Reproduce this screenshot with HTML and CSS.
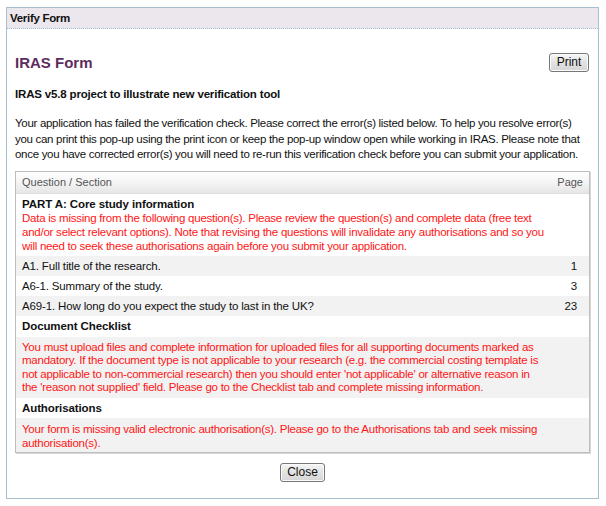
FILE: index.html
```html
<!DOCTYPE html>
<html>
<head>
<meta charset="utf-8">
<link rel="stylesheet" href="styles.css">
</head>
<body>
<div class="dialog">
  <div class="titlebar">Verify Form</div>
  <div class="content">
    <div class="heading-row">
      <h1 class="title">IRAS Form</h1>
      <button class="btn btn-print">Print</button>
    </div>
    <h2 class="subtitle">IRAS v5.8 project to illustrate new verification tool</h2>
    <p class="intro">Your application has failed the verification check. Please correct the error(s) listed below. To help you resolve error(s)<br>you can print this pop-up using the print icon or keep the pop-up window open while working in IRAS. Please note that<br>once you have corrected error(s) you will need to re-run this verification check before you can submit your application.</p>
    <div class="table">
      <div class="thead">
        <span class="th-q">Question / Section</span>
        <span class="th-p">Page</span>
      </div>
      <div class="section">
        <div class="sec-title">PART A: Core study information</div>
        <div class="err">Data is missing from the following question(s). Please review the question(s) and complete data (free text<br>and/or select relevant options). Note that revising the questions will invalidate any authorisations and so you<br>will need to seek these authorisations again before you submit your application.</div>
      </div>
      <div class="row alt"><span>A1. Full title of the research.</span><span class="pg">1</span></div>
      <div class="row"><span>A6-1. Summary of the study.</span><span class="pg">3</span></div>
      <div class="row alt"><span>A69-1. How long do you expect the study to last in the UK?</span><span class="pg">23</span></div>
      <div class="sec-head">Document Checklist</div>
      <div class="err-block err-block-doc">You must upload files and complete information for uploaded files for all supporting documents marked as<br>mandatory. If the document type is not applicable to your research (e.g. the commercial costing template is<br>not applicable to non-commercial research) then you should enter 'not applicable' or alternative reason in<br>the 'reason not supplied' field. Please go to the Checklist tab and complete missing information.</div>
      <div class="sec-head sec-head-auth">Authorisations</div>
      <div class="err-block err-block-auth">Your form is missing valid electronic authorisation(s). Please go to the Authorisations tab and seek missing<br>authorisation(s).</div>
    </div>
    <div class="footer">
      <button class="btn btn-close">Close</button>
    </div>
  </div>
</div>
</body>
</html>
```
FILE: styles.css
```css
html, body {
  margin: 0;
  padding: 0;
  background: #ffffff;
}
body {
  font-family: "Liberation Sans", Arial, sans-serif;
  font-size: 11.5px;
  color: #111111;
}
.dialog {
  margin: 7px 0 0 6px;
  width: 591px;
  border: 1px solid #a9bfcd;
  background: #ffffff;
}
.titlebar {
  height: 20px;
  line-height: 20px;
  background: #ece6ed;
  border-bottom: 1px dotted #a9bfcd;
  padding-left: 3px;
  font-weight: bold;
  font-size: 11.5px;
  letter-spacing: -0.3px;
  color: #111;
}
.content {
  padding: 24px 8px 16px 8px;
}
.heading-row {
  display: flex;
  justify-content: space-between;
  align-items: center;
  height: 19px;
}
.title {
  margin: 0;
  font-size: 15px;
  font-weight: bold;
  color: #5c2d5e;
  line-height: 19px;
}
.btn {
  font-family: "Liberation Sans", Arial, sans-serif;
  font-size: 12px;
  color: #111;
  height: 19px;
  padding: 0 4px;
  border: 1px solid #777777;
  border-radius: 3px;
  background: linear-gradient(#f6f6f6, #e2e2e2 50%, #d6d6d6);
  box-shadow: inset 0 0 0 1px #fbfbfb;
  line-height: 17px;
}
.btn-print {
  width: 40px;
  margin-right: 1px;
}
.btn-close {
  width: 45px;
}
.subtitle {
  margin: 15px 0 0 0;
  font-size: 11.5px;
  font-weight: bold;
  letter-spacing: -0.17px;
  line-height: 15px;
}
.intro {
  margin: 14px 0 0 0;
  line-height: 15.5px;
  letter-spacing: -0.3px;
  white-space: nowrap;
}
.table {
  margin-top: 8px;
  border: 1px solid #bdbdbd;
  box-shadow: 1px 1px 0 #d8d8d8;
}
.thead {
  display: flex;
  justify-content: space-between;
  height: 21px;
  line-height: 21px;
  padding: 0 6px;
  background: linear-gradient(#ffffff, #f4f4f4 50%, #e6e6e6);
  border-bottom: 1px solid #dddddd;
  font-size: 11px;
  color: #555555;
}
.section {
  padding: 3px 30px 3px 6px;
}
.sec-title {
  font-weight: bold;
  line-height: 14px;
  letter-spacing: -0.1px;
}
.err {
  color: #ff1515;
  line-height: 14px;
  letter-spacing: -0.24px;
  white-space: nowrap;
}
.row {
  display: flex;
  justify-content: space-between;
  height: 20px;
  line-height: 20px;
  padding: 0 12px 0 6px;
  letter-spacing: -0.15px;
}
.alt {
  background: #f2f2f2;
}
.sec-head {
  height: 21px;
  line-height: 21px;
  padding: 0 6px;
  font-weight: bold;
  letter-spacing: -0.1px;
}
.sec-head-auth {
  height: 20px;
  line-height: 20px;
}
.err-block {
  background: #f2f2f2;
  color: #ff1515;
  padding: 4px 30px 3px 6px;
  line-height: 13.5px;
  letter-spacing: -0.24px;
  white-space: nowrap;
}
.err-block-auth {
  line-height: 14px;
  padding: 4px 30px 2px 6px;
}
.footer {
  display: flex;
  justify-content: center;
  margin-top: 10px;
}
```
